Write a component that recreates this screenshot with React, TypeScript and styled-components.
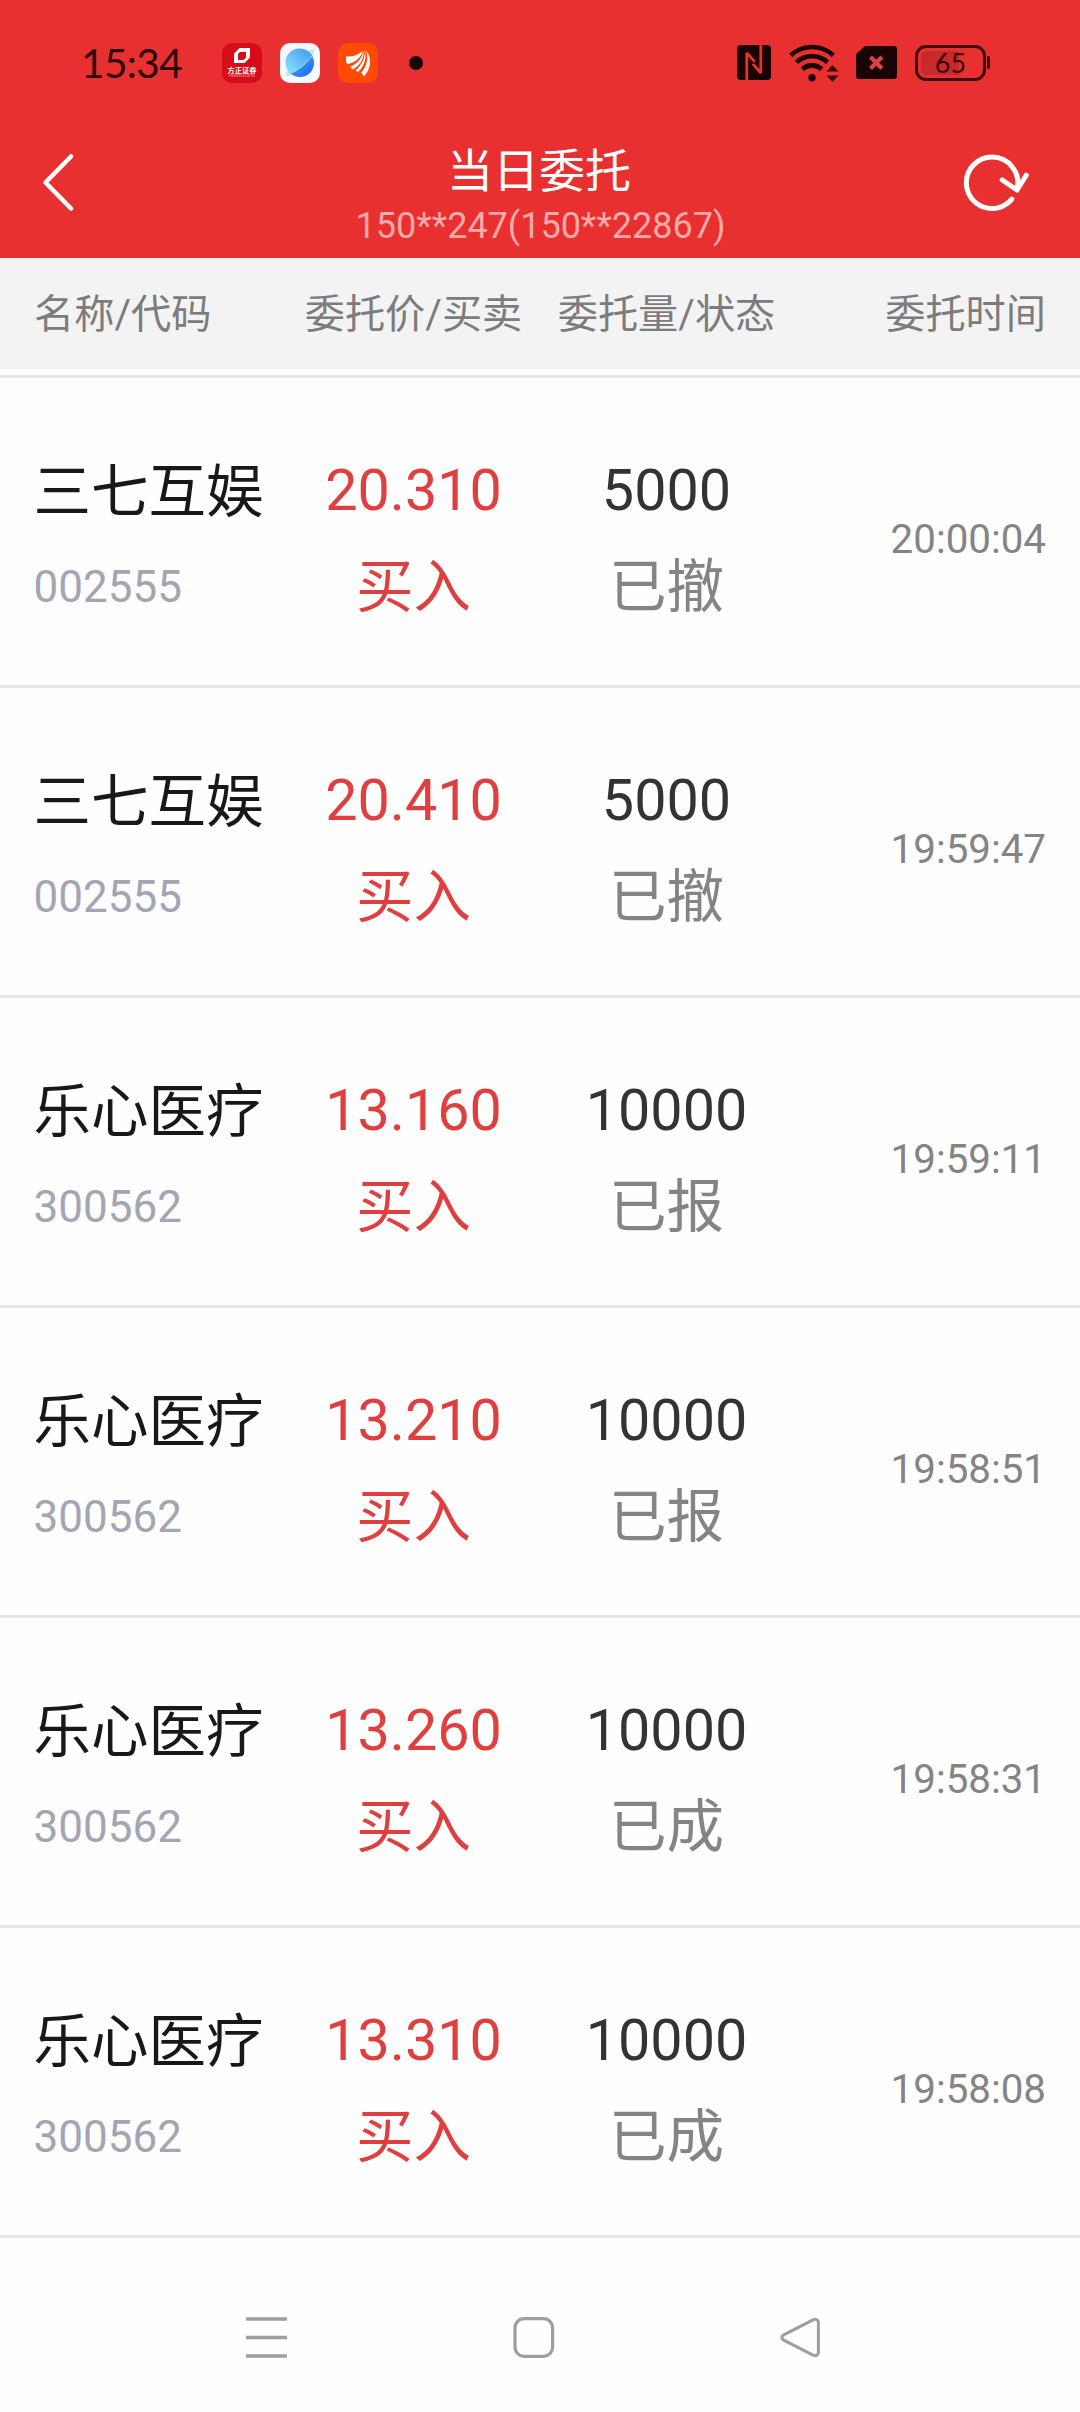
import React from "react";
import styled, { createGlobalStyle } from "styled-components";

const GlobalStyle = createGlobalStyle`
  *, *::before, *::after { box-sizing: border-box; }
  html, body { margin: 0; padding: 0; background: #fefefe; }
  body { font-family: Roboto, "Noto Sans CJK SC", sans-serif; }
  svg { display: block; flex: none; overflow: visible; }
`;

const Screen = styled.div`
  width: 1080px;
  height: 2412px;
  display: flex;
  flex-direction: column;
  background: #fefefe;
  overflow: hidden;
`;

const TopArea = styled.header`
  height: 258px;
  background: #e83030;
  display: flex;
  flex-direction: column;
`;

const StatusBar = styled.div`
  height: 125px;
  padding: 0 90px 0 81px;
  display: flex;
  align-items: center;
  justify-content: space-between;
`;

const StatusGroup = styled.div`
  display: flex;
  align-items: center;
`;

const Clock = styled.span`
  width: 141px;
  font-family: Lato, sans-serif;
  font-size: 40.5px;
  line-height: 48px;
  letter-spacing: -0.6px;
  color: #2a0505;
`;

const AppIcons = styled.div`
  display: flex;
  align-items: center;
  gap: 18px;
`;

const FounderIcon = styled.div`
  width: 40px;
  height: 40px;
  border-radius: 10px;
  background: #d80c18;
  display: flex;
  flex-direction: column;
  align-items: center;
  padding-top: 5px;
`;

const FounderName = styled.span`
  margin-top: 4px;
  font-size: 7.2px;
  font-weight: 700;
  line-height: 8px;
  color: #fff;
  white-space: nowrap;
`;

const FounderLatin = styled.span`
  font-size: 2.6px;
  line-height: 3px;
  color: #f6b8bb;
  white-space: nowrap;
`;

const Dot = styled.span`
  width: 14px;
  height: 14px;
  margin-left: 31px;
  border-radius: 50%;
  background: #180303;
`;

const Battery = styled.div`
  display: flex;
  align-items: center;
  gap: 1px;
`;

const BatteryShell = styled.div`
  width: 71px;
  height: 36px;
  border: 3px solid #3c0707;
  border-radius: 11px;
  padding: 3px;
  display: flex;
`;

const BatteryLevel = styled.div`
  width: 59px;
  border-radius: 6px;
  background: linear-gradient(to right, #c62a2b 65%, transparent 65%);
  display: flex;
  align-items: center;
  justify-content: center;
  font-family: Lato, sans-serif;
  font-size: 27px;
  line-height: 24px;
  color: #3c0707;
`;

const BatteryCap = styled.div`
  width: 3px;
  height: 13px;
  border-radius: 0 2px 2px 0;
  background: #3c0707;
`;

const TitleBar = styled.div`
  height: 133px;
  padding: 0 50px 0 41px;
  display: flex;
  justify-content: space-between;
`;

const IconButton = styled.button<{ $end?: boolean }>`
  width: 70px;
  height: 114px;
  padding: 0;
  border: 0;
  background: none;
  display: flex;
  align-items: center;
  justify-content: ${(p) => (p.$end ? "flex-end" : "flex-start")};
`;

const Titles = styled.div`
  display: flex;
  flex-direction: column;
  align-items: center;
  padding: 19px 0 0 10px;
`;

const Title = styled.h1`
  margin: 0;
  padding-right: 3px;
  font-size: 46px;
  font-weight: 400;
  line-height: 54px;
  color: #fff;
`;

const Account = styled.span`
  font-size: 36px;
  line-height: 42px;
  margin-top: 7px;
  color: #ffa9a9;
`;

const Columns = styled.div`
  display: grid;
  grid-template-columns: repeat(4, 1fr);
  padding: 0 34px;
`;

const TableHead = styled(Columns)`
  height: 111px;
  margin-bottom: 6px;
  padding-top: 2px;
  align-items: center;
  background: #f3f3f3;
  font-size: 40.2px;
  line-height: 48px;
  color: #7c7c7c;
`;

const HeadCell = styled.span<{ $align: string }>`
  text-align: ${(p) => p.$align};
  white-space: nowrap;
`;

const OrderList = styled.main`
  border-top: 3px solid #e6e6e6;
`;

const OrderRow = styled(Columns)`
  height: 310px;
  border-bottom: 3px solid #e6e6e6;
  align-items: center;
`;

const Cell = styled.div<{ $align?: string; $shift?: number }>`
  display: flex;
  flex-direction: column;
  align-items: ${(p) => p.$align ?? "center"};
  padding-top: ${(p) => p.$shift ?? 14}px;
`;

const Line = styled.span<{ $color: string; $size?: number; $drop?: number }>`
  height: 96px;
  padding-top: ${(p) => p.$drop ?? 0}px;
  font-size: ${(p) => p.$size ?? 57.5}px;
  line-height: 96px;
  color: ${(p) => p.$color};
  white-space: nowrap;
`;

const LeftCell = styled(Cell)`
  margin-left: -0.5px;
`;

const NavBar = styled.nav`
  flex: 1;
  padding: 24px 260px 0 246px;
  display: grid;
  grid-template-columns: 41px 41px 40px;
  align-items: center;
  justify-content: space-between;
`;

type Order = {
  name: string;
  code: string;
  price: string;
  side: string;
  amount: string;
  state: string;
  time: string;
};

const orders: Order[] = [
  { name: "三七互娱", code: "002555", price: "20.310", side: "买入", amount: "5000", state: "已撤", time: "20:00:04" },
  { name: "三七互娱", code: "002555", price: "20.410", side: "买入", amount: "5000", state: "已撤", time: "19:59:47" },
  { name: "乐心医疗", code: "300562", price: "13.160", side: "买入", amount: "10000", state: "已报", time: "19:59:11" },
  { name: "乐心医疗", code: "300562", price: "13.210", side: "买入", amount: "10000", state: "已报", time: "19:58:51" },
  { name: "乐心医疗", code: "300562", price: "13.260", side: "买入", amount: "10000", state: "已成", time: "19:58:31" },
  { name: "乐心医疗", code: "300562", price: "13.310", side: "买入", amount: "10000", state: "已成", time: "19:58:08" },
];

const SignalGroup = styled(StatusGroup)`
  gap: 18px;
`;

const GlobeIcon = () => (
  <svg width="40" height="40" viewBox="0 0 40 40">
    <defs>
      <linearGradient id="globe" x1="0" y1="0" x2="1" y2="1">
        <stop offset="0" stopColor="#5fb4fb" />
        <stop offset="1" stopColor="#1668ea" />
      </linearGradient>
      <linearGradient id="shine" x1="0" y1="1" x2="1" y2="0">
        <stop offset="0" stopColor="#8ee4fb" />
        <stop offset="1" stopColor="#3f97f8" />
      </linearGradient>
    </defs>
    <rect width="40" height="40" rx="10" fill="#f7f8fb" />
    <path d="M6.5 33c-1.6-2 .5-6 5-11L27 8.5c3-2 6-3 7-1.8 1 1.6-1 5-4 8.5L13 31c-3 2-5.5 3-6.5 2z" fill="#c3e5fb" />
    <circle cx="20" cy="20" r="14" fill="url(#globe)" />
    <path d="M10.5 30.3A14 14 0 0 1 28.5 8.8c2 1.2 3 3 3.5 4.2C27 20 19 27 10.5 30.3z" fill="url(#shine)" />
    <path d="M11 30.3C19 27 27.5 19.5 32 12.8" fill="none" stroke="#a9dcff" strokeWidth="0.9" />
  </svg>
);

const WingIcon = () => (
  <svg width="40" height="40" viewBox="0 0 40 40">
    <rect width="40" height="40" rx="10" fill="#ff4a04" />
    <g fill="#fff">
      <path d="M8 13.5C14 14 20 12 24.5 8c-1 6-7.5 12-15.5 13C8 19 7.8 16 8 13.5z" />
      <path d="M25.5 7.3c1 7.5-3.5 16-11 19.2-1-.7-1.7-1.6-2.2-2.7C19.5 21 24.3 15 25.5 7.3z" />
      <path d="M26.8 7c2.2 6.5.3 15-6.5 21.8-1-.2-2-.6-2.800-1.2C24 22 27.5 14.5 26.8 7z" />
      <path d="M28.3 7.5C34 15 33.5 25 26 33.5c-.9-1.3-1.7-2.5-2.7-3.800C29 23 30.5 15 28.3 7.5z" />
    </g>
  </svg>
);

const NfcIcon = () => (
  <svg width="34" height="35" viewBox="0 0 34 35">
    <rect width="34" height="35" rx="4" fill="#1a0303" />
    <path
      d="M9.8 35V8l8 8.8M23.8 0v28l-8-9.2"
      fill="none"
      stroke="#e83030"
      strokeWidth="2.8"
      strokeLinejoin="bevel"
    />
  </svg>
);

const WifiIcon = () => (
  <svg width="49" height="38" viewBox="0 0 49 38">
    <g fill="none" stroke="#1a0303" strokeWidth="4.6">
      <path d="M1.7 11.5a31 31 0 0 1 42.6 0" />
      <path d="M7.5 18.3a22.5 22.5 0 0 1 31 0" />
      <path d="M13.4 25.3a14 14 0 0 1 19.2 0" strokeWidth="5" />
    </g>
    <circle cx="23" cy="33.8" r="3.7" fill="#1a0303" />
    <path d="M37.5 27.5l6-6.5 6 6.5z M37.5 31.5h12l-6 6.5z" fill="#3c0707" />
  </svg>
);

const SimIcon = () => (
  <svg width="41" height="33" viewBox="0 0 41 33">
    <path d="M9 0h29a3 3 0 0 1 3 3v27a3 3 0 0 1-3 3H3a3 3 0 0 1-3-3V8z" fill="#1a0303" />
    <path d="M14.5 11l11.5 11.5M26 11L14.5 22.5" stroke="#e04040" strokeWidth="4.2" />
  </svg>
);

export default function App() {
  return (
    <>
      <GlobalStyle />
      <Screen>
        <TopArea>
          <StatusBar>
            <StatusGroup>
              <Clock>15:34</Clock>
              <AppIcons>
                <FounderIcon>
                  <svg width="16" height="15" viewBox="0 0 16 15">
                    <path
                      d="M5.5 0H16v9.5L10.5 15H0V5.5zM5.800 4L4 6v6h5.5l2.5-2.5V4z"
                      fill="#fff"
                      fillRule="evenodd"
                    />
                  </svg>
                  <FounderName>方正证券</FounderName>
                  <FounderLatin>FOUNDER SECURITIES</FounderLatin>
                </FounderIcon>
                <GlobeIcon />
                <WingIcon />
              </AppIcons>
              <Dot />
            </StatusGroup>
            <SignalGroup>
              <NfcIcon />
              <WifiIcon />
              <SimIcon />
              <Battery>
                <BatteryShell>
                  <BatteryLevel>65</BatteryLevel>
                </BatteryShell>
                <BatteryCap />
              </Battery>
            </SignalGroup>
          </StatusBar>
          <TitleBar>
            <IconButton aria-label="返回">
              <svg width="34" height="58" viewBox="0 0 34 58">
                <path
                  d="M30 3.500L4.500 29.500l25.500 26"
                  fill="none"
                  stroke="#fff"
                  strokeWidth="4.6"
                  strokeLinecap="round"
                  strokeLinejoin="round"
                />
              </svg>
            </IconButton>
            <Titles>
              <Title>当日委托</Title>
              <Account>150**247(150**22867)</Account>
            </Titles>
            <IconButton $end aria-label="刷新">
              <svg width="66" height="58" viewBox="0 0 66 58">
                <g fill="none" stroke="#fff" strokeWidth="5" strokeLinecap="round" strokeLinejoin="round">
                  <path d="M47.8 46.2A25.7 25.7 0 0 1 2.3 29.8A25.7 25.7 0 0 1 28 4.1A25.7 25.7 0 0 1 53 36" />
                  <path d="M38.2 27L53 37 62.3 22.2" />
                </g>
              </svg>
            </IconButton>
          </TitleBar>
        </TopArea>

        <TableHead>
          <HeadCell $align="left">名称/代码</HeadCell>
          <HeadCell $align="center">委托价/买卖</HeadCell>
          <HeadCell $align="center">委托量/状态</HeadCell>
          <HeadCell $align="right">委托时间</HeadCell>
        </TableHead>

        <OrderList>
          {orders.map((o) => (
            <OrderRow key={o.time}>
              <LeftCell $align="flex-start">
                <Line $color="#181818" $drop={2}>{o.name}</Line>
                <Line $color="#a3a5b5" $size={44}>{o.code}</Line>
              </LeftCell>
              <Cell>
                <Line $color="#e03f3f">{o.price}</Line>
                <Line $color="#e03f3f" $drop={1}>{o.side}</Line>
              </Cell>
              <Cell>
                <Line $color="#333333">{o.amount}</Line>
                <Line $color="#848484" $drop={1}>{o.state}</Line>
              </Cell>
              <Cell $align="flex-end" $shift={16}>
                <Line $color="#848484" $size={40.3}>{o.time}</Line>
              </Cell>
            </OrderRow>
          ))}
        </OrderList>

        <NavBar>
          <svg width="41" height="41" viewBox="0 0 41 41">
            <path d="M0 2h41M0 20.5h41M0 39h41" stroke="#9e9e9e" strokeWidth="3.6" />
          </svg>
          <svg width="41" height="41" viewBox="0 0 41 41">
            <rect x="2" y="1.7" width="37.6" height="37.6" rx="9" fill="none" stroke="#9e9e9e" strokeWidth="3.2" />
          </svg>
          <svg width="40" height="41" viewBox="0 0 40 41">
            <path
              d="M33 2.8L3.3 18.2a2.6 2.6 0 0 0 0 4.6L33 38.2c2.6 1.4 5.4 0 5.4-2.6V5.4C38.4 2.8 35.6 1.4 33 2.8z"
              fill="none"
              stroke="#9e9e9e"
              strokeWidth="3"
            />
          </svg>
        </NavBar>
      </Screen>
    </>
  );
}
